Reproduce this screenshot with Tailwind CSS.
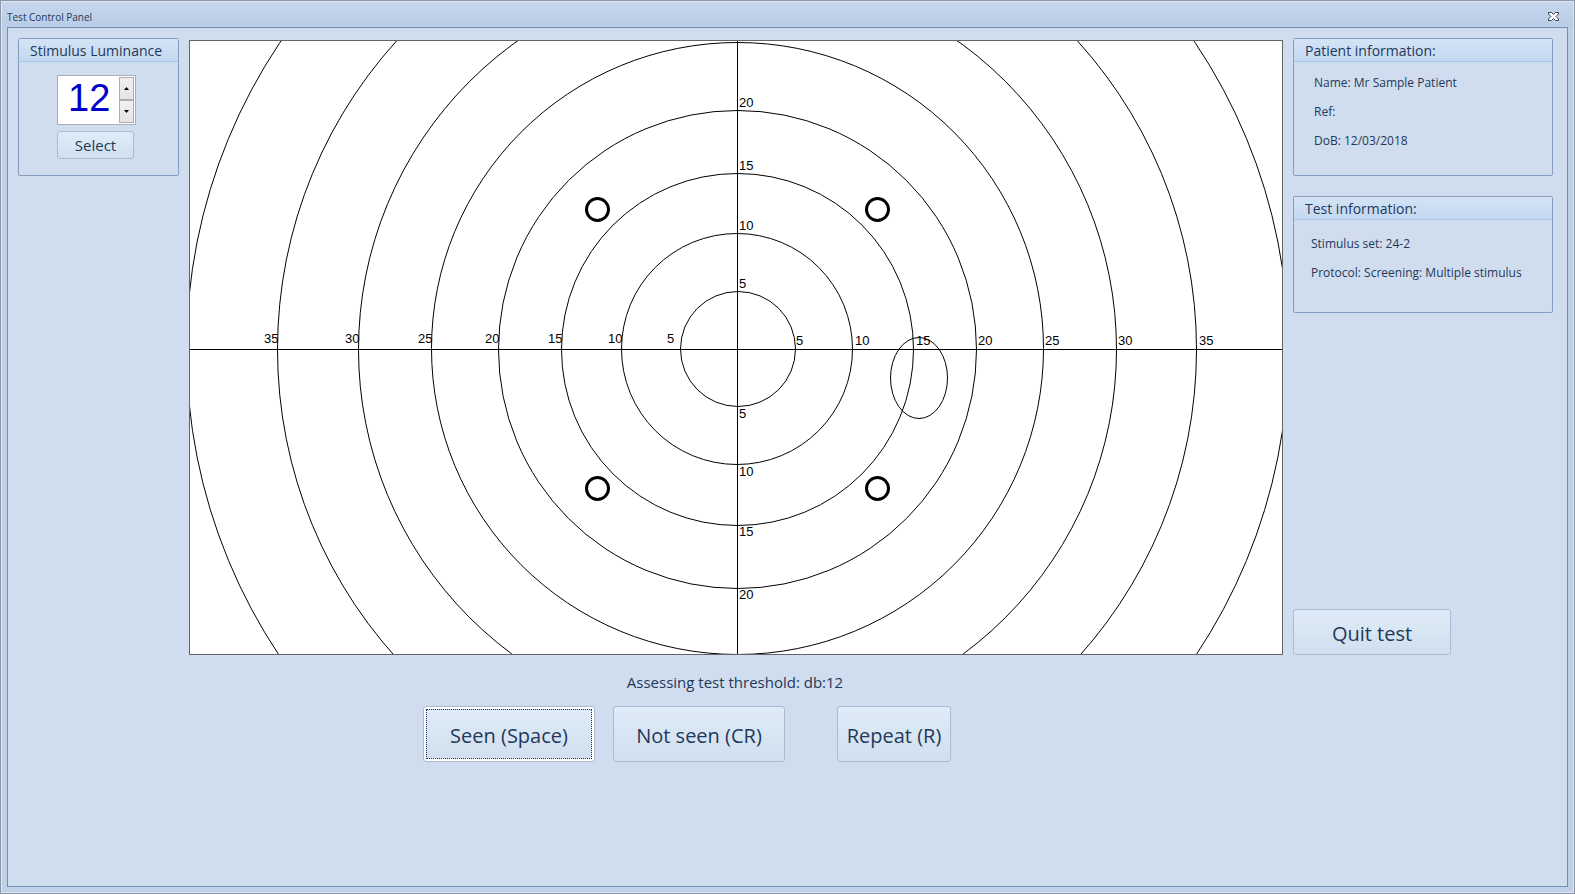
<!DOCTYPE html>
<html lang="en">
<head>
  <meta charset="UTF-8" />
  <meta name="viewport" content="width=device-width, initial-scale=1.0" />
  <title>Test Control Panel</title>
  <script src="https://cdn.jsdelivr.net/npm/@tailwindcss/browser@4"></script>
</head>
<body class="font-['Open_Sans','Noto_Sans',sans-serif] text-[#1e395b]">
  <div class="min-h-screen flex flex-col border border-[#8d97a6] bg-[#bfd1e9]">
    <div class="grow flex flex-col border border-[#dbe7f5] px-[5px] pb-[5px]">

      <header class="h-[25px] -mx-[5px] px-[5px] flex items-center justify-between bg-linear-to-b from-[#c5d6ee] to-[#bacde6]">
        <h1 class="text-[10px] leading-[16px] pt-[5px]">Test Control Panel</h1>
        <button type="button" aria-label="Close" class="mr-2 mt-[3px]">
          <svg width="13" height="11" viewBox="0 0 13 11">
            <path d="M1.5 1.5 H4.5 L6.5 3.5 L8.5 1.5 H11.5 V3 L9 5.5 L11.5 8 V9.5 H8.5 L6.5 7.5 L4.5 9.5 H1.5 V8 L4 5.5 L1.5 3 Z" fill="#fff" stroke="#3b4554" />
          </svg>
        </button>
      </header>

      <main class="grow border border-[#6f8fb5] bg-[#d0ddee] pt-[10px] pl-[10px] pr-[14px]">
        <div class="flex gap-[10px]">

          <!-- Luminance -->
          <section class="w-[161px] shrink-0 self-start border border-[#859ebf] rounded-xs">
            <h2 class="h-[23px] px-[11px] text-[14px] leading-[23px] border-b border-[#a9c5e6] bg-linear-to-b from-[#d4e4f6] to-[#c3d8f1]"><label for="luminance">Stimulus Luminance</label></h2>
            <div class="pt-[13px] pb-[16px] pl-[38px] flex flex-col items-start gap-[6px]">
              <div class="flex w-[79px] h-[50px] p-px border border-[#abadb3] bg-white">
                <input id="luminance" type="text" inputmode="numeric" value="12" class="min-w-0 grow pl-[9px] pb-[4px] text-[38px] leading-[42px] text-[#0000c8] font-['Liberation_Sans',Arial,sans-serif] outline-none" />
                <div class="flex flex-col w-[15px] shrink-0">
                  <button type="button" id="up" aria-label="Increase" class="grow flex items-center justify-center border border-[#acacac] bg-linear-to-b from-[#f0f0f0] to-[#e5e5e5]">
                    <svg width="5" height="3" viewBox="0 0 5 3"><path d="M0 3 L2.5 0 L5 3 Z" /></svg>
                  </button>
                  <button type="button" id="down" aria-label="Decrease" class="grow flex items-center justify-center border border-[#acacac] bg-linear-to-b from-[#f0f0f0] to-[#e5e5e5]">
                    <svg width="5" height="3" viewBox="0 0 5 3"><path d="M0 0 L2.5 3 L5 0 Z" /></svg>
                  </button>
                </div>
              </div>
              <button type="button" class="w-[77px] h-[28px] text-[15px] leading-[24px] border border-[#abbad0] rounded-[3px] bg-linear-to-b from-[#dfebf8] to-[#d1dfee]">Select</button>
            </div>
          </section>

          <!-- Visual field -->
          <div class="grow min-w-0 pt-[2px]">
            <div class="border border-[#646464] bg-white">
              <svg class="block w-full" viewBox="190 41 1092 613" role="img" aria-label="Visual field">
                <g fill="none" stroke="#000" stroke-width="1">
                  <path d="M190 349.5 H1282 M737.5 41 V654" />
                  <circle cx="738" cy="349" r="57.5" />
                  <circle cx="737" cy="349" r="115.5" />
                  <circle cx="737.5" cy="349.5" r="176" />
                  <circle cx="737.5" cy="349.5" r="239" />
                  <circle cx="737.5" cy="348.5" r="306" />
                  <circle cx="737.5" cy="349.5" r="379" />
                  <circle cx="737" cy="349.5" r="459.5" />
                  <circle cx="737.5" cy="349.5" r="551" />
                  <ellipse cx="919" cy="378" rx="28.5" ry="40.5" />
                </g>
                <g fill="#fff" stroke="#000" stroke-width="3">
                  <circle cx="597.5" cy="209.5" r="11" />
                  <circle cx="877.5" cy="209.5" r="11" />
                  <circle cx="597.5" cy="488.5" r="11" />
                  <circle cx="877.5" cy="488.5" r="11" />
                </g>
                <g class="text-[13px] font-['Liberation_Sans',Arial,sans-serif]" fill="#000">
                  <text x="264" y="343">35</text>
                  <text x="345" y="343">30</text>
                  <text x="418" y="343">25</text>
                  <text x="485" y="343">20</text>
                  <text x="548" y="343">15</text>
                  <text x="608" y="343">10</text>
                  <text x="667" y="343">5</text>
                  <text x="796" y="345">5</text>
                  <text x="855" y="345">10</text>
                  <text x="916" y="345">15</text>
                  <text x="978" y="345">20</text>
                  <text x="1045" y="345">25</text>
                  <text x="1118" y="345">30</text>
                  <text x="1199" y="345">35</text>
                  <text x="739" y="107">20</text>
                  <text x="739" y="170">15</text>
                  <text x="739" y="230">10</text>
                  <text x="739" y="288">5</text>
                  <text x="739" y="418">5</text>
                  <text x="739" y="476">10</text>
                  <text x="739" y="536">15</text>
                  <text x="739" y="599">20</text>
                </g>
              </svg>
            </div>
          </div>

          <!-- Info -->
          <aside class="w-[260px] shrink-0 flex flex-col">
            <section class="border border-[#859ebf] rounded-xs">
              <h2 class="h-[23px] px-[11px] text-[14px] leading-[23px] border-b border-[#a9c5e6] bg-linear-to-b from-[#d4e4f6] to-[#c3d8f1]">Patient information:</h2>
              <div class="pt-[6px] pb-[20px] pl-[20px] text-[12px] leading-[29px]">
                <p>Name: Mr Sample Patient</p>
                <p>Ref:</p>
                <p>DoB: 12/03/2018</p>
              </div>
            </section>
            <section class="mt-[20px] border border-[#859ebf] rounded-xs">
              <h2 class="h-[23px] px-[11px] text-[14px] leading-[23px] border-b border-[#a9c5e6] bg-linear-to-b from-[#d4e4f6] to-[#c3d8f1]">Test information:</h2>
              <div class="pt-[9px] pb-[25px] pl-[17px] text-[12px] leading-[29px]">
                <p>Stimulus set: 24-2</p>
                <p>Protocol: Screening: Multiple stimulus</p>
              </div>
            </section>
            <button type="button" class="mt-auto w-[158px] h-[46px] pt-[3px] text-[20px] border border-[#abbad0] rounded-[3px] bg-linear-to-b from-[#dfebf8] to-[#d1dfee]">Quit test</button>
          </aside>
        </div>

        <!-- Responses -->
        <div class="ml-[171px] mr-[270px] pt-[15px]">
          <p class="pr-[2px] text-center text-[15px] leading-[24px]">Assessing test threshold: db:12</p>
          <div class="flex justify-center mt-[12px] pr-[98px]">
            <button type="button" class="w-[172px] h-[56px] p-[2px] text-[20px] border border-[#abbad0] rounded-[3px] bg-white">
              <span class="flex h-full pt-[3px] items-center justify-center border border-dotted border-[#1e395b] bg-linear-to-b from-[#dfebf8] to-[#d1dfee]">Seen (Space)</span>
            </button>
            <button type="button" class="ml-[18px] w-[172px] h-[56px] pt-[3px] text-[20px] border border-[#abbad0] rounded-[3px] bg-linear-to-b from-[#dfebf8] to-[#d1dfee]">Not seen (CR)</button>
            <button type="button" class="ml-[52px] w-[114px] h-[56px] pt-[3px] text-[20px] border border-[#abbad0] rounded-[3px] bg-linear-to-b from-[#dfebf8] to-[#d1dfee]">Repeat (R)</button>
          </div>
        </div>
      </main>
    </div>
  </div>

  <script>
    const luminance = document.getElementById('luminance');
    const step = (n) => {
      luminance.value = Math.max(0, parseInt(luminance.value || '0', 10) + n);
    };
    document.getElementById('up').addEventListener('click', () => step(1));
    document.getElementById('down').addEventListener('click', () => step(-1));
  </script>
</body>
</html>
